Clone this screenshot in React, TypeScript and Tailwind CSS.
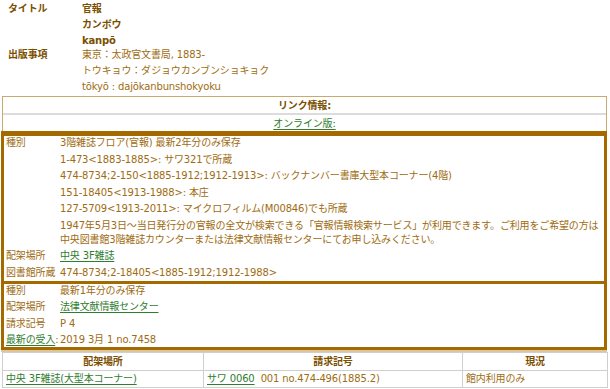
import React from "react";

const Link = ({ children }: { children: React.ReactNode }) => (
  <span className="text-[#2f7d2f] underline underline-offset-[2px] decoration-[#2f7d2f]">{children}</span>
);

function Row({ label, children }: { label?: React.ReactNode; children: React.ReactNode }) {
  return (
    <>
      <div className="whitespace-nowrap">{label}</div>
      <div>{children}</div>
    </>
  );
}

export default function App() {
  return (
    <div className="w-[610px] h-[389px] overflow-hidden bg-white text-[10px] tracking-[-0.15px] text-[#9e6c12] font-['DejaVu_Sans','Noto_Sans_CJK_JP',sans-serif]">
      {/* Title section */}
      <div className="pl-[8px] pt-[1px] grid grid-cols-[74px_1fr] leading-[16px]">
        <div className="font-bold text-[#7a4f00]">タイトル</div>
        <div className="font-bold text-[#7a4f00]">
          <div>官報</div>
          <div>カンボウ</div>
          <div>kanpō</div>
        </div>
        <div className="font-bold text-[#7a4f00] mt-[-2px]">出版事項</div>
        <div className="mt-[-2px]">
          <div>東京：太政官文書局, 1883-</div>
          <div>トウキョウ：ダジョウカンブンショキョク</div>
          <div>tōkyō : dajōkanbunshokyoku</div>
        </div>
      </div>

      {/* Link info */}
      <div className="mt-[1px] ml-[2px] w-[605px] border border-[#c8a96e] border-b-0">
        <div className="h-[18px] flex items-center justify-center font-bold text-[#7a4f00] border-b-2 border-[#dcdcdc]">
          リンク情報:
        </div>
        <div className="h-[16px] flex items-center justify-center">
          <Link>オンライン版:</Link>
        </div>
      </div>

      {/* Brown box */}
      <div className="ml-[1px] w-[606px] border-[3px] border-t-[5px] border-[#a46a00]">
        <div className="grid grid-cols-[54px_1fr] gap-y-[2.5px] leading-[14px] pl-[2px] pr-[1px] pb-[1px]">
          <Row label="種別">3階雑誌フロア(官報) 最新2年分のみ保存</Row>
          <Row>1-473&lt;1883-1885&gt;: サワ321で所蔵</Row>
          <Row>474-8734;2-150&lt;1885-1912;1912-1913&gt;: バックナンバー書庫大型本コーナー(4階)</Row>
          <Row>151-18405&lt;1913-1988&gt;: 本庄</Row>
          <Row>127-5709&lt;1913-2011&gt;: マイクロフィルム(M00846)でも所蔵</Row>
          <Row>
            1947年5月3日～当日発行分の官報の全文が検索できる「官報情報検索サービス」が利用できます。ご利用をご希望の方は中央図書館3階雑誌カウンターまたは法律文献情報センターにてお申し込みください。
          </Row>
          <Row label="配架場所">
            <Link>中央 3F雑誌</Link>
          </Row>
          <Row label="図書館所蔵">474-8734;2-18405&lt;1885-1912;1912-1988&gt;</Row>
        </div>
        <div className="h-[3px] bg-[#a46a00]" />
        <div className="grid grid-cols-[54px_1fr] gap-y-[2.5px] leading-[14px] pl-[2px] pr-[1px]">
          <Row label="種別">最新1年分のみ保存</Row>
          <Row label="配架場所">
            <Link>法律文献情報センター</Link>
          </Row>
          <Row label="請求記号">P 4</Row>
          <Row
            label={
              <span>
                <Link>最新の受入</Link>:
              </span>
            }
          >
            2019 3月 1 no.7458
          </Row>
        </div>
      </div>
      <div className="ml-[1px] w-[606px] h-[2px] bg-[#dcc79a]" />

      {/* Holdings table */}
      <table className="ml-[2px] w-[605px] border-collapse table-fixed leading-[14px]">
        <colgroup>
          <col className="w-[201px]" />
          <col className="w-[259px]" />
          <col className="w-[145px]" />
        </colgroup>
        <thead>
          <tr className="h-[18px]">
            <th className="border border-[#cfcfcf] font-bold text-[#7a4f00] text-center p-0">配架場所</th>
            <th className="border border-[#cfcfcf] font-bold text-[#7a4f00] text-center p-0">請求記号</th>
            <th className="border border-[#cfcfcf] font-bold text-[#7a4f00] text-center p-0">現況</th>
          </tr>
        </thead>
        <tbody>
          <tr className="h-[17px]">
            <td className="border border-[#cfcfcf] pl-[3px] whitespace-nowrap">
              <Link>中央 3F雑誌(大型本コーナー)</Link>
            </td>
            <td className="border border-[#cfcfcf] pl-[3px] whitespace-nowrap">
              <Link>サワ 0060</Link>
              <span>&nbsp; 001 no.474-496(1885.2)</span>
            </td>
            <td className="border border-[#cfcfcf] pl-[3px] whitespace-nowrap">館内利用のみ</td>
          </tr>
        </tbody>
      </table>
    </div>
  );
}
